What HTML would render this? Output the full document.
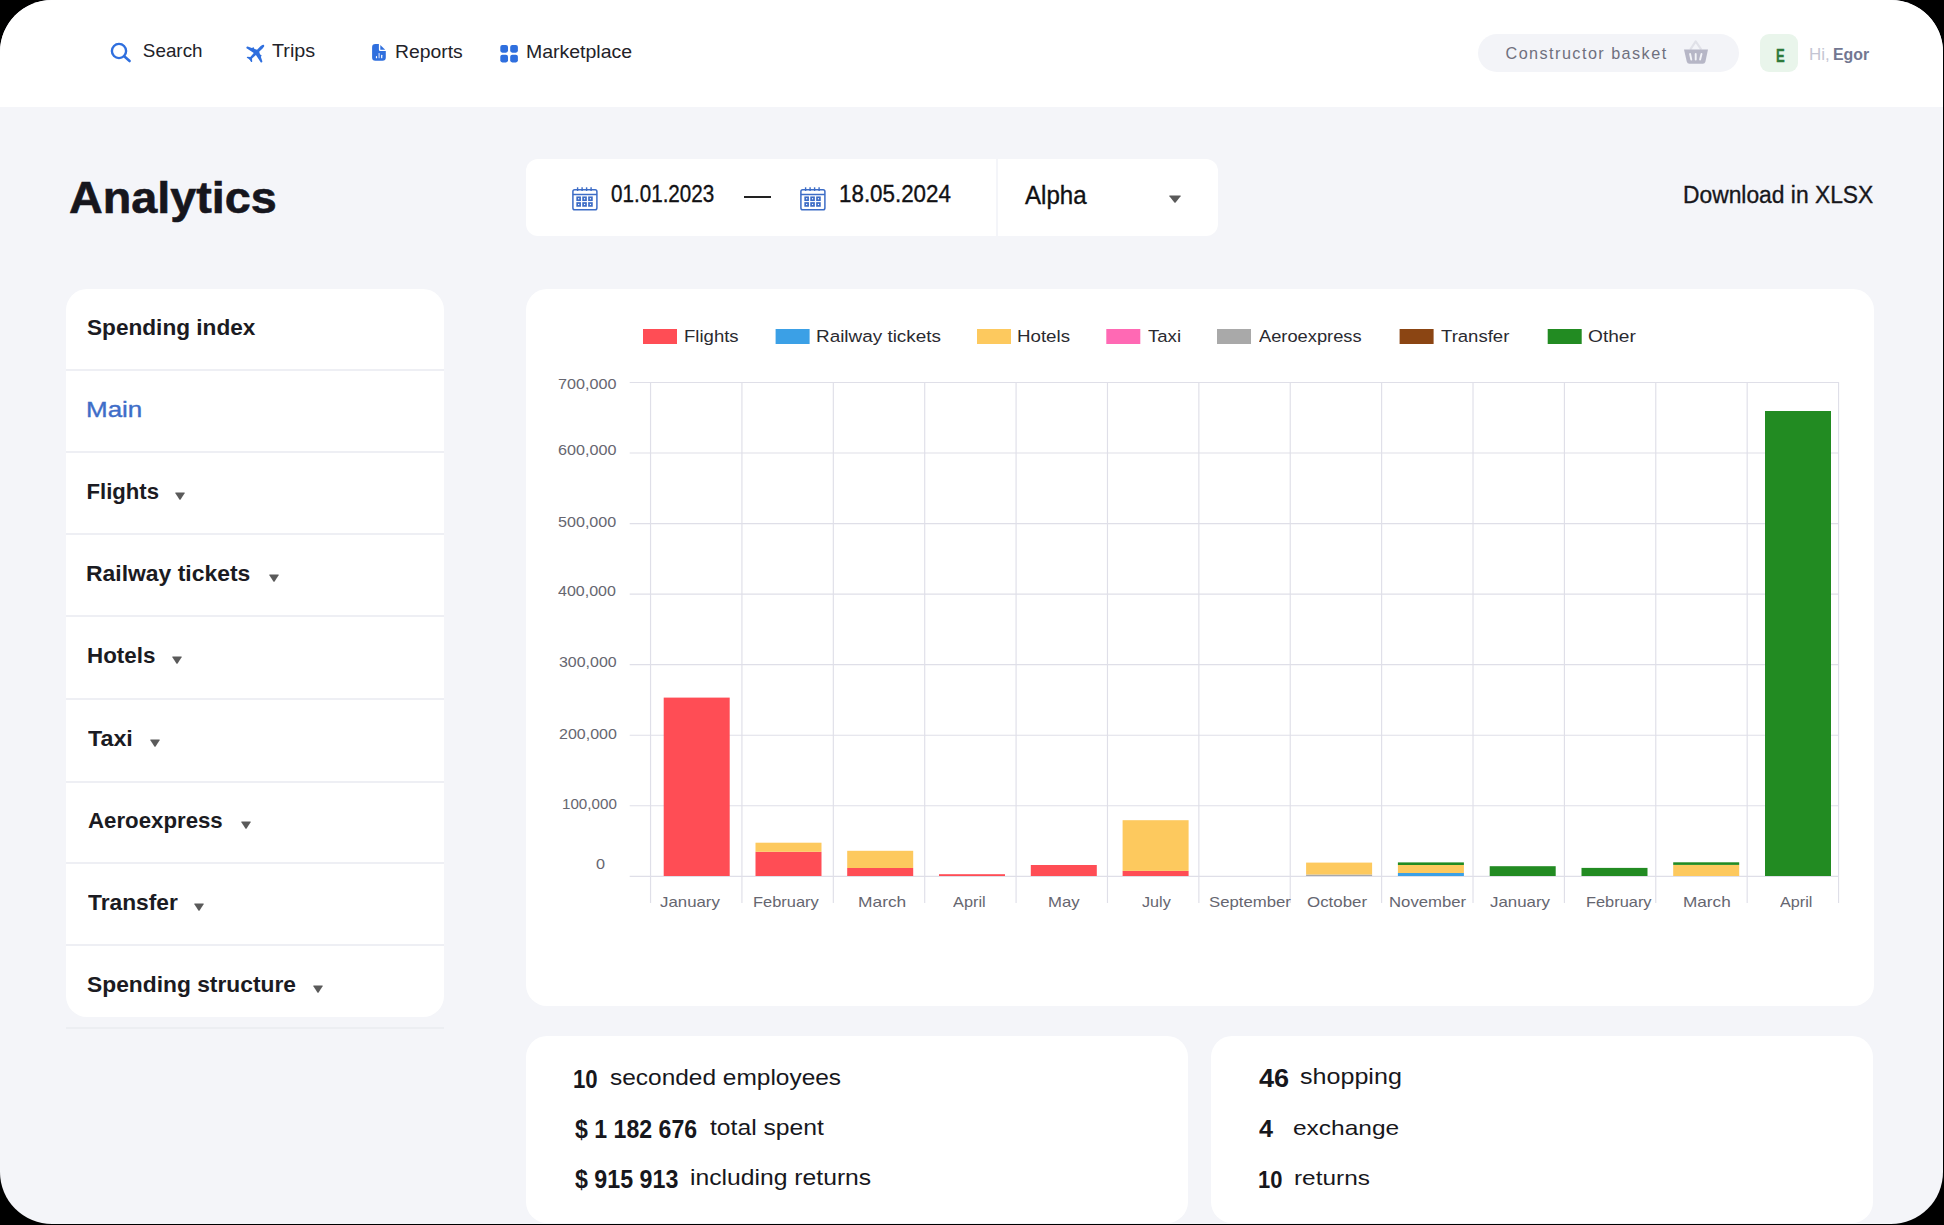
<!DOCTYPE html>
<html><head><meta charset="utf-8">
<style>
html,body{margin:0;padding:0;background:#000;width:1944px;height:1225px;overflow:hidden;}
*{box-sizing:border-box;}
#page{position:absolute;left:0;top:0;width:1943px;height:1224px;border-radius:52px;background:#f4f5f9;overflow:hidden;font-family:"Liberation Sans",sans-serif;color:#17171c;}
.a{position:absolute;}
.t{position:absolute;white-space:nowrap;line-height:1;transform-origin:0 0;font-family:"Liberation Sans",sans-serif;}
#hdr{position:absolute;left:0;top:0;width:1943px;height:107px;background:#fff;}
.card{position:absolute;background:#fff;}
.div{position:absolute;left:66px;width:378px;height:1.6px;background:#eeeff4;}
</style></head><body>
<div id="page">
<div id="hdr"></div>
<svg class="a" style="left:109px;top:42px" width="24" height="22" viewBox="0 0 24 22">
 <circle cx="10" cy="9" r="7.1" fill="none" stroke="#2f6fde" stroke-width="2.4"/>
 <line x1="15.2" y1="14.2" x2="20.6" y2="19.0" stroke="#2f6fde" stroke-width="2.6" stroke-linecap="round"/>
</svg>
<svg class="a" style="left:240px;top:38px" width="30" height="30" viewBox="0 0 30 30">
 <g transform="translate(15.7 15.2) rotate(45)" fill="#2f6fde">
  <path d="M0 -11.6 C1.3 -11.6 1.5 -9.8 1.5 -8.6 L1.5 -3.4 L10.4 1.0 Q11.2 1.6 10.6 2.6 Q10.3 3.0 9.6 2.8 L1.5 1.2 L1.2 6.4 L3.4 8.3 Q3.6 9.3 3.0 9.5 L0.3 8.8 L0 9.4 L-0.3 8.8 L-3.0 9.5 Q-3.6 9.3 -3.4 8.3 L-1.2 6.4 L-1.5 1.2 L-9.6 2.8 Q-10.3 3.0 -10.6 2.6 Q-11.2 1.6 -10.4 1.0 L-1.5 -3.4 L-1.5 -8.6 C-1.5 -9.8 -1.3 -11.6 0 -11.6Z"/>
  <rect x="4.2" y="-2.6" width="1.9" height="3.2" rx="0.8"/>
  <rect x="-6.1" y="-2.6" width="1.9" height="3.2" rx="0.8"/>
 </g>
</svg>
<svg class="a" style="left:364px;top:38px" width="30" height="30" viewBox="0 0 30 30">
 <path fill="#2f6fde" d="M11.4 6 H14.9 V11.7 Q14.9 13.0 16.2 13.0 H21.8 V19.5 Q21.8 22.8 18.5 22.8 H11.4 Q8.1 22.8 8.1 19.5 V9.3 Q8.1 6 11.4 6 Z"/>
 <path fill="#2f6fde" d="M16.3 7.0 L21.2 11.7 H16.3 Z"/>
 <rect x="11.9" y="18.1" width="1.2" height="2.1" rx="0.55" fill="#fff"/>
 <rect x="14.5" y="14.9" width="1.2" height="5.3" rx="0.55" fill="#c9d7f6"/>
 <rect x="17.1" y="16.7" width="1.2" height="3.5" rx="0.55" fill="#fff"/>
</svg>
<svg class="a" style="left:500px;top:45px" width="18" height="18" viewBox="0 0 18 18">
 <rect x="0.3" y="0" width="7.7" height="7.7" rx="2.1" fill="#2f6fde"/><rect x="10.2" y="0" width="7.7" height="7.7" rx="2.1" fill="#2f6fde"/>
 <rect x="0.3" y="9.7" width="7.7" height="7.7" rx="2.1" fill="#2f6fde"/><rect x="10.2" y="9.7" width="7.7" height="7.7" rx="2.1" fill="#2f6fde"/>
</svg>
<div class="a" style="left:1478px;top:34px;width:261px;height:38px;border-radius:19px;background:#f3f4f8"></div>
<svg class="a" style="left:1675px;top:36px" width="40" height="34" viewBox="0 0 40 34">
 <path d="M15.2 13.6 L20.7 5.4 L26.3 13.6" fill="none" stroke="#e0e1e8" stroke-width="2.1" stroke-linejoin="round"/>
 <path d="M9 13.5 H33 L30.4 25.7 Q29.9 27.8 27.8 27.8 H14.4 Q12.3 27.8 11.8 25.7 Z" fill="#b6b6c6"/>
 <g stroke="#f3f4f8" stroke-width="1.9" stroke-linecap="round">
  <line x1="15.1" y1="18" x2="16.3" y2="23.6"/><line x1="20.7" y1="18" x2="20.7" y2="23.6"/><line x1="26.5" y1="18" x2="25.1" y2="23.6"/>
 </g>
</svg>
<div class="a" style="left:1760px;top:34px;width:38px;height:38px;border-radius:9px;background:#e9f5eb"></div>

<div class="card" style="left:526px;top:159px;width:470px;height:77px;border-radius:12px 0 0 12px"></div>
<div class="card" style="left:998px;top:159px;width:220px;height:77px;border-radius:0 12px 12px 0"></div>
<svg class="a" style="left:572.3px;top:186.6px" width="26" height="24" viewBox="0 0 26 24">
<rect x="0.9" y="2.7" width="24" height="20" rx="1.8" fill="none" stroke="#3c6cc6" stroke-width="1.5"/>
<line x1="0.9" y1="7.5" x2="24.9" y2="7.5" stroke="#3c6cc6" stroke-width="1.5"/>
<line x1="5.6" y1="0.3" x2="5.6" y2="4" stroke="#3c6cc6" stroke-width="1.4"/>
<line x1="10.1" y1="0.3" x2="10.1" y2="4" stroke="#3c6cc6" stroke-width="1.4"/>
<line x1="14.6" y1="0.3" x2="14.6" y2="4" stroke="#3c6cc6" stroke-width="1.4"/>
<line x1="19.1" y1="0.3" x2="19.1" y2="4" stroke="#3c6cc6" stroke-width="1.4"/>
<g fill="none" stroke="#3c6cc6" stroke-width="1.7">
<rect x="5.2" y="10.3" width="2.9" height="2.9"/><rect x="11.1" y="10.3" width="2.9" height="2.9"/><rect x="17" y="10.3" width="2.9" height="2.9"/>
<rect x="5.2" y="16" width="2.9" height="2.9"/><rect x="11.1" y="16" width="2.9" height="2.9"/><rect x="17" y="16" width="2.9" height="2.9"/>
</g></svg>
<svg class="a" style="left:800.3px;top:186.6px" width="26" height="24" viewBox="0 0 26 24">
<rect x="0.9" y="2.7" width="24" height="20" rx="1.8" fill="none" stroke="#3c6cc6" stroke-width="1.5"/>
<line x1="0.9" y1="7.5" x2="24.9" y2="7.5" stroke="#3c6cc6" stroke-width="1.5"/>
<line x1="5.6" y1="0.3" x2="5.6" y2="4" stroke="#3c6cc6" stroke-width="1.4"/>
<line x1="10.1" y1="0.3" x2="10.1" y2="4" stroke="#3c6cc6" stroke-width="1.4"/>
<line x1="14.6" y1="0.3" x2="14.6" y2="4" stroke="#3c6cc6" stroke-width="1.4"/>
<line x1="19.1" y1="0.3" x2="19.1" y2="4" stroke="#3c6cc6" stroke-width="1.4"/>
<g fill="none" stroke="#3c6cc6" stroke-width="1.7">
<rect x="5.2" y="10.3" width="2.9" height="2.9"/><rect x="11.1" y="10.3" width="2.9" height="2.9"/><rect x="17" y="10.3" width="2.9" height="2.9"/>
<rect x="5.2" y="16" width="2.9" height="2.9"/><rect x="11.1" y="16" width="2.9" height="2.9"/><rect x="17" y="16" width="2.9" height="2.9"/>
</g></svg>
<div class="a" style="left:744px;top:196px;width:27px;height:2px;background:#222"></div>
<svg class="a" style="left:1169px;top:195px" width="12" height="8" viewBox="0 0 12 8"><path d="M0.6 0.4 H11.4 Q12 0.4 11.6 1.2 L6.6 7.5 Q6.0 8 5.4 7.5 L0.4 1.2 Q0 0.4 0.6 0.4Z" fill="#5a5a5a"/></svg>

<div class="card" style="left:66px;top:289px;width:378px;height:728px;border-radius:21px"></div>
<div class="div" style="top:369px"></div><div class="div" style="top:451px"></div><div class="div" style="top:533px"></div><div class="div" style="top:615px"></div><div class="div" style="top:698px"></div><div class="div" style="top:781px"></div><div class="div" style="top:862px"></div><div class="div" style="top:944px"></div>
<div class="a" style="left:66px;top:1027.3px;width:378px;height:1.5px;background:#eceef2"></div>
<svg class="a" style="left:175px;top:492px" width="10" height="8" viewBox="0 0 10 8"><path d="M0.6 0.4 H9.4 Q10 0.4 9.6 1.2 L5.6 7.5 Q5.0 8 4.4 7.5 L0.4 1.2 Q0 0.4 0.6 0.4Z" fill="#5a5a5a"/></svg><svg class="a" style="left:269px;top:574px" width="10" height="8" viewBox="0 0 10 8"><path d="M0.6 0.4 H9.4 Q10 0.4 9.6 1.2 L5.6 7.5 Q5.0 8 4.4 7.5 L0.4 1.2 Q0 0.4 0.6 0.4Z" fill="#5a5a5a"/></svg><svg class="a" style="left:172px;top:656px" width="10" height="8" viewBox="0 0 10 8"><path d="M0.6 0.4 H9.4 Q10 0.4 9.6 1.2 L5.6 7.5 Q5.0 8 4.4 7.5 L0.4 1.2 Q0 0.4 0.6 0.4Z" fill="#5a5a5a"/></svg><svg class="a" style="left:150px;top:739px" width="10" height="8" viewBox="0 0 10 8"><path d="M0.6 0.4 H9.4 Q10 0.4 9.6 1.2 L5.6 7.5 Q5.0 8 4.4 7.5 L0.4 1.2 Q0 0.4 0.6 0.4Z" fill="#5a5a5a"/></svg><svg class="a" style="left:241px;top:821px" width="10" height="8" viewBox="0 0 10 8"><path d="M0.6 0.4 H9.4 Q10 0.4 9.6 1.2 L5.6 7.5 Q5.0 8 4.4 7.5 L0.4 1.2 Q0 0.4 0.6 0.4Z" fill="#5a5a5a"/></svg><svg class="a" style="left:194px;top:903px" width="10" height="8" viewBox="0 0 10 8"><path d="M0.6 0.4 H9.4 Q10 0.4 9.6 1.2 L5.6 7.5 Q5.0 8 4.4 7.5 L0.4 1.2 Q0 0.4 0.6 0.4Z" fill="#5a5a5a"/></svg><svg class="a" style="left:313px;top:985px" width="10" height="8" viewBox="0 0 10 8"><path d="M0.6 0.4 H9.4 Q10 0.4 9.6 1.2 L5.6 7.5 Q5.0 8 4.4 7.5 L0.4 1.2 Q0 0.4 0.6 0.4Z" fill="#5a5a5a"/></svg>

<div class="card" style="left:526px;top:289px;width:1348px;height:717px;border-radius:21px"></div>
<svg class="a" style="left:0;top:0" width="1944" height="1225" viewBox="0 0 1944 1225"><line x1="629.7" y1="876.35" x2="1839" y2="876.35" stroke="#dfdfe8" stroke-width="1.15"/>
<line x1="629.7" y1="805.79" x2="1839" y2="805.79" stroke="#dfdfe8" stroke-width="1.15"/>
<line x1="629.7" y1="735.24" x2="1839" y2="735.24" stroke="#dfdfe8" stroke-width="1.15"/>
<line x1="629.7" y1="664.68" x2="1839" y2="664.68" stroke="#dfdfe8" stroke-width="1.15"/>
<line x1="629.7" y1="594.12" x2="1839" y2="594.12" stroke="#dfdfe8" stroke-width="1.15"/>
<line x1="629.7" y1="523.57" x2="1839" y2="523.57" stroke="#dfdfe8" stroke-width="1.15"/>
<line x1="629.7" y1="453.01" x2="1839" y2="453.01" stroke="#dfdfe8" stroke-width="1.15"/>
<line x1="629.7" y1="382.45" x2="1839" y2="382.45" stroke="#dfdfe8" stroke-width="1.15"/>
<line x1="650.55" y1="382" x2="650.55" y2="903" stroke="#dfdfe8" stroke-width="1.15"/>
<line x1="741.93" y1="382" x2="741.93" y2="903" stroke="#dfdfe8" stroke-width="1.15"/>
<line x1="833.32" y1="382" x2="833.32" y2="903" stroke="#dfdfe8" stroke-width="1.15"/>
<line x1="924.70" y1="382" x2="924.70" y2="903" stroke="#dfdfe8" stroke-width="1.15"/>
<line x1="1016.09" y1="382" x2="1016.09" y2="903" stroke="#dfdfe8" stroke-width="1.15"/>
<line x1="1107.47" y1="382" x2="1107.47" y2="903" stroke="#dfdfe8" stroke-width="1.15"/>
<line x1="1198.86" y1="382" x2="1198.86" y2="903" stroke="#dfdfe8" stroke-width="1.15"/>
<line x1="1290.24" y1="382" x2="1290.24" y2="903" stroke="#dfdfe8" stroke-width="1.15"/>
<line x1="1381.63" y1="382" x2="1381.63" y2="903" stroke="#dfdfe8" stroke-width="1.15"/>
<line x1="1473.01" y1="382" x2="1473.01" y2="903" stroke="#dfdfe8" stroke-width="1.15"/>
<line x1="1564.40" y1="382" x2="1564.40" y2="903" stroke="#dfdfe8" stroke-width="1.15"/>
<line x1="1655.78" y1="382" x2="1655.78" y2="903" stroke="#dfdfe8" stroke-width="1.15"/>
<line x1="1747.17" y1="382" x2="1747.17" y2="903" stroke="#dfdfe8" stroke-width="1.15"/>
<line x1="1838.56" y1="382" x2="1838.56" y2="903" stroke="#dfdfe8" stroke-width="1.15"/>
<rect x="663.7" y="697.6" width="66" height="178.4" fill="#ff4d55"/>
<rect x="755.5" y="851.8" width="66" height="24.2" fill="#ff4d55"/>
<rect x="755.5" y="842.7" width="66" height="9.1" fill="#fdc95e"/>
<rect x="847.2" y="868.0" width="66" height="8.0" fill="#ff4d55"/>
<rect x="847.2" y="850.8" width="66" height="17.2" fill="#fdc95e"/>
<rect x="939.0" y="874.2" width="66" height="1.8" fill="#ff4d55"/>
<rect x="1030.8" y="865.0" width="66" height="11.0" fill="#ff4d55"/>
<rect x="1122.6" y="870.9" width="66" height="5.1" fill="#ff4d55"/>
<rect x="1122.6" y="820.2" width="66" height="50.7" fill="#fdc95e"/>
<rect x="1306.1" y="874.5" width="66" height="1.5" fill="#a9a9a9"/>
<rect x="1306.1" y="862.6" width="66" height="11.9" fill="#fdc95e"/>
<rect x="1397.9" y="873.0" width="66" height="3.0" fill="#3ba0e6"/>
<rect x="1397.9" y="865.0" width="66" height="8.0" fill="#fdc95e"/>
<rect x="1397.9" y="862.4" width="66" height="2.6" fill="#228b22"/>
<rect x="1489.7" y="866.2" width="66" height="9.8" fill="#228b22"/>
<rect x="1581.5" y="867.9" width="66" height="8.1" fill="#228b22"/>
<rect x="1673.2" y="864.9" width="66" height="11.1" fill="#fdc95e"/>
<rect x="1673.2" y="862.3" width="66" height="2.6" fill="#228b22"/>
<rect x="1765.0" y="411.0" width="66" height="465.0" fill="#228b22"/>
<rect x="643" y="329" width="34" height="15" fill="#ff4d55"/>
<rect x="775.6" y="329" width="34" height="15" fill="#3ba0e6"/>
<rect x="977" y="329" width="34" height="15" fill="#fdc95e"/>
<rect x="1106.3" y="329" width="34" height="15" fill="#ff69b4"/>
<rect x="1217" y="329" width="34" height="15" fill="#a9a9a9"/>
<rect x="1399.6" y="329" width="34" height="15" fill="#8b4513"/>
<rect x="1547.7" y="329" width="34" height="15" fill="#228b22"/></svg>
<div class="card" style="left:526px;top:1036px;width:662px;height:187px;border-radius:21px"></div>
<div class="card" style="left:1211px;top:1036px;width:662px;height:187px;border-radius:21px"></div>
<span class="t" style="left:142.86px;top:42.49px;font-size:18.84px;font-weight:400;color:#222228">Search</span>
<span class="t" style="left:271.70px;top:42.49px;font-size:18.84px;font-weight:400;color:#222228;transform:scaleX(1.0491)">Trips</span>
<span class="t" style="left:395.15px;top:42.88px;font-size:18.26px;font-weight:400;color:#222228;transform:scaleX(1.0597)">Reports</span>
<span class="t" style="left:525.54px;top:42.88px;font-size:18.26px;font-weight:400;color:#222228;transform:scaleX(1.0674)">Marketplace</span>
<span class="t" style="left:1505.49px;top:44.70px;font-size:16.23px;font-weight:400;color:#6f707e;letter-spacing:1.443px">Constructor basket</span>
<span class="t" style="left:1775.89px;top:47.55px;font-size:17.83px;font-weight:700;color:#2e7a3a;transform:scaleX(0.7313);-webkit-text-stroke:0.4px #2e7a3a">E</span>
<span class="t" style="left:1809.14px;top:46.53px;font-size:16.67px;font-weight:400;color:#c4c5d3;transform:scaleX(1.0171)">Hi,</span>
<span class="t" style="left:1832.79px;top:46.53px;font-size:16.67px;font-weight:700;color:#737791;transform:scaleX(0.9534)">Egor</span>
<span class="t" style="left:68.70px;top:175.70px;font-size:43.77px;font-weight:700;color:#16161d;transform:scaleX(1.0673);-webkit-text-stroke:0.6px #16161d">Analytics</span>
<span class="t" style="left:611.17px;top:182.79px;font-size:23.19px;font-weight:400;color:#111114;transform:scaleX(0.8897);-webkit-text-stroke:0.35px #111114">01.01.2023</span>
<span class="t" style="left:838.51px;top:182.79px;font-size:23.19px;font-weight:400;color:#111114;transform:scaleX(0.9646);-webkit-text-stroke:0.35px #111114">18.05.2024</span>
<span class="t" style="left:1025.10px;top:182.51px;font-size:24.93px;font-weight:400;color:#111114;transform:scaleX(0.9669);-webkit-text-stroke:0.35px #111114">Alpha</span>
<span class="t" style="left:1682.97px;top:183.74px;font-size:23.48px;font-weight:400;color:#17171c;transform:scaleX(0.9723);-webkit-text-stroke:0.35px #17171c">Download in XLSX</span>
<span class="t" style="left:87.32px;top:316.83px;font-size:22.32px;font-weight:700;color:#1b1b22;transform:scaleX(1.0136)">Spending index</span>
<span class="t" style="left:85.92px;top:399.44px;font-size:21.59px;font-weight:400;color:#3e6dc8;transform:scaleX(1.2036);-webkit-text-stroke:0.35px #3e6dc8">Main</span>
<span class="t" style="left:86.45px;top:481.15px;font-size:22.17px;font-weight:700;color:#1b1b22">Flights</span>
<span class="t" style="left:86.39px;top:563.25px;font-size:22.17px;font-weight:700;color:#1b1b22;transform:scaleX(1.0342)">Railway tickets</span>
<span class="t" style="left:87.13px;top:645.21px;font-size:22.46px;font-weight:700;color:#1b1b22;transform:scaleX(0.9960)">Hotels</span>
<span class="t" style="left:87.87px;top:727.61px;font-size:22.46px;font-weight:700;color:#1b1b22;transform:scaleX(1.0347)">Taxi</span>
<span class="t" style="left:87.53px;top:810.15px;font-size:22.17px;font-weight:700;color:#1b1b22;transform:scaleX(1.0036)">Aeroexpress</span>
<span class="t" style="left:87.77px;top:892.18px;font-size:22.03px;font-weight:700;color:#1b1b22;transform:scaleX(1.0341)">Transfer</span>
<span class="t" style="left:87.32px;top:974.18px;font-size:22.03px;font-weight:700;color:#1b1b22;transform:scaleX(1.0355)">Spending structure</span>
<span class="t" style="left:573.37px;top:1065.83px;font-size:26.09px;font-weight:700;color:#17171c;transform:scaleX(0.8502)">10</span>
<span class="t" style="left:609.77px;top:1066.65px;font-size:21.23px;font-weight:400;color:#17171c;transform:scaleX(1.1523)">seconded employees</span>
<span class="t" style="left:574.97px;top:1116.97px;font-size:25.22px;font-weight:700;color:#17171c;transform:scaleX(0.9172)">$ 1 182 676</span>
<span class="t" style="left:710.45px;top:1116.87px;font-size:21.92px;font-weight:400;color:#17171c;transform:scaleX(1.1267)">total spent</span>
<span class="t" style="left:574.97px;top:1166.79px;font-size:25.07px;font-weight:700;color:#17171c;transform:scaleX(0.9264)">$ 915 913</span>
<span class="t" style="left:689.97px;top:1166.55px;font-size:22.05px;font-weight:400;color:#17171c;transform:scaleX(1.1201)">including returns</span>
<span class="t" style="left:1259.23px;top:1066.34px;font-size:25.36px;font-weight:700;color:#17171c;transform:scaleX(1.0686)">46</span>
<span class="t" style="left:1300.15px;top:1066.64px;font-size:21.37px;font-weight:400;color:#17171c;transform:scaleX(1.1746)">shopping</span>
<span class="t" style="left:1259.25px;top:1117.47px;font-size:23.91px;font-weight:700;color:#17171c;transform:scaleX(1.0532)">4</span>
<span class="t" style="left:1293.42px;top:1116.97px;font-size:21.10px;font-weight:400;color:#17171c;transform:scaleX(1.1611)">exchange</span>
<span class="t" style="left:1258.18px;top:1167.77px;font-size:23.91px;font-weight:700;color:#17171c;transform:scaleX(0.9192)">10</span>
<span class="t" style="left:1293.59px;top:1167.27px;font-size:21.10px;font-weight:400;color:#17171c;transform:scaleX(1.1559)">returns</span>
<span class="t" style="left:683.82px;top:328.26px;font-size:17.10px;font-weight:400;color:#2a2a30;transform:scaleX(1.0849)">Flights</span>
<span class="t" style="left:815.79px;top:328.26px;font-size:17.10px;font-weight:400;color:#2a2a30;transform:scaleX(1.1057)">Railway tickets</span>
<span class="t" style="left:1017.20px;top:328.26px;font-size:17.10px;font-weight:400;color:#2a2a30;transform:scaleX(1.0943)">Hotels</span>
<span class="t" style="left:1148.03px;top:328.26px;font-size:17.10px;font-weight:400;color:#2a2a30;transform:scaleX(1.0865)">Taxi</span>
<span class="t" style="left:1259.00px;top:328.26px;font-size:17.10px;font-weight:400;color:#2a2a30;transform:scaleX(1.0690)">Aeroexpress</span>
<span class="t" style="left:1441.03px;top:328.26px;font-size:17.10px;font-weight:400;color:#2a2a30;transform:scaleX(1.0847)">Transfer</span>
<span class="t" style="left:1588.24px;top:328.26px;font-size:17.10px;font-weight:400;color:#2a2a30;transform:scaleX(1.1193)">Other</span>
<span class="t" style="left:659.96px;top:894.62px;font-size:14.80px;font-weight:400;color:#666670;transform:scaleX(1.1370)">January</span>
<span class="t" style="left:752.69px;top:894.62px;font-size:14.80px;font-weight:400;color:#666670;transform:scaleX(1.1100)">February</span>
<span class="t" style="left:857.71px;top:894.62px;font-size:14.80px;font-weight:400;color:#666670;transform:scaleX(1.1741)">March</span>
<span class="t" style="left:953.00px;top:894.62px;font-size:14.80px;font-weight:400;color:#666670;transform:scaleX(1.1028)">April</span>
<span class="t" style="left:1048.26px;top:894.62px;font-size:14.80px;font-weight:400;color:#666670;transform:scaleX(1.1311)">May</span>
<span class="t" style="left:1142.08px;top:894.62px;font-size:14.80px;font-weight:400;color:#666670;transform:scaleX(1.0927)">July</span>
<span class="t" style="left:1208.76px;top:894.62px;font-size:14.80px;font-weight:400;color:#666670;transform:scaleX(1.1317)">September</span>
<span class="t" style="left:1307.15px;top:894.62px;font-size:14.80px;font-weight:400;color:#666670;transform:scaleX(1.1423)">October</span>
<span class="t" style="left:1389.06px;top:894.62px;font-size:14.80px;font-weight:400;color:#666670;transform:scaleX(1.1301)">November</span>
<span class="t" style="left:1490.36px;top:894.62px;font-size:14.80px;font-weight:400;color:#666670;transform:scaleX(1.1408)">January</span>
<span class="t" style="left:1586.19px;top:894.62px;font-size:14.80px;font-weight:400;color:#666670;transform:scaleX(1.1066)">February</span>
<span class="t" style="left:1683.33px;top:894.62px;font-size:14.80px;font-weight:400;color:#666670;transform:scaleX(1.1612)">March</span>
<span class="t" style="left:1780.10px;top:894.62px;font-size:14.80px;font-weight:400;color:#666670;transform:scaleX(1.0958)">April</span>
<span class="t" style="left:557.69px;top:375.81px;font-size:15.40px;font-weight:400;color:#666670;transform:scaleX(1.0504)">700,000</span>
<span class="t" style="left:557.69px;top:441.51px;font-size:15.40px;font-weight:400;color:#666670;transform:scaleX(1.0504)">600,000</span>
<span class="t" style="left:557.85px;top:514.41px;font-size:15.40px;font-weight:400;color:#666670;transform:scaleX(1.0474)">500,000</span>
<span class="t" style="left:557.98px;top:583.21px;font-size:15.40px;font-weight:400;color:#666670;transform:scaleX(1.0415)">400,000</span>
<span class="t" style="left:559.06px;top:654.31px;font-size:15.40px;font-weight:400;color:#666670;transform:scaleX(1.0364)">300,000</span>
<span class="t" style="left:558.90px;top:725.91px;font-size:15.40px;font-weight:400;color:#666670;transform:scaleX(1.0393)">200,000</span>
<span class="t" style="left:561.89px;top:796.01px;font-size:15.40px;font-weight:400;color:#666670;transform:scaleX(0.9852)">100,000</span>
<span class="t" style="left:596.05px;top:856.11px;font-size:15.40px;font-weight:400;color:#666670;transform:scaleX(1.0552)">0</span>
</div>
</body></html>
